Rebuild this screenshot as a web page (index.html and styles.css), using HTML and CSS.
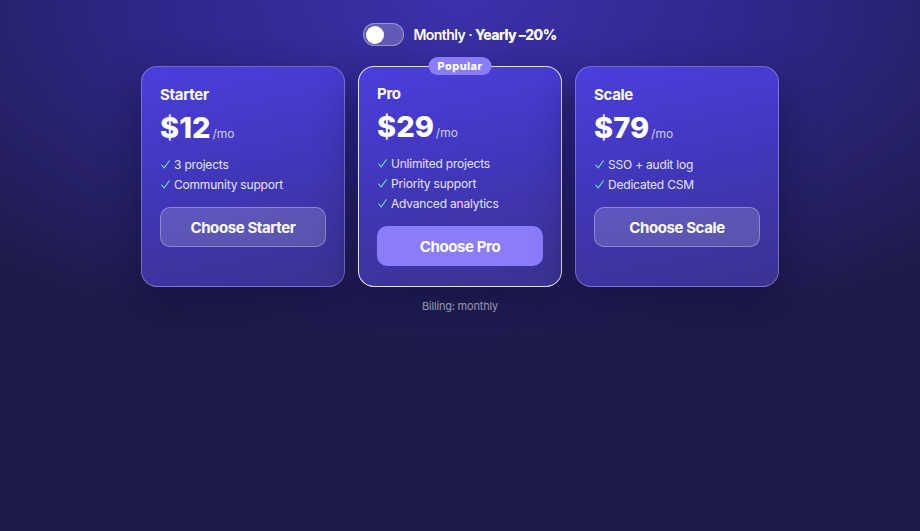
FILE: index.html
```html
<!DOCTYPE html>
<html lang="en">

<head>
  <meta charset="UTF-8">
  <meta name="viewport" content="width=device-width, initial-scale=1.0">
  <title>Pricing</title>
  <link rel="stylesheet" href="styles.css">
</head>

<body>
  <div class="page">
    <div class="billing-toggle">
      <div class="switch">
        <span class="knob"></span>
      </div>
      <span class="toggle-label">Monthly · <b>Yearly –20%</b></span>
    </div>

    <div class="plans">
      <div class="plan">
        <h3>Starter</h3>
        <div class="price">$12<span>/mo</span></div>
        <ul>
          <li><svg class="check" viewBox="0 0 9 9"><polyline points="0.8,5 3.2,8 8.3,0.8"/></svg>3 projects</li>
          <li><svg class="check" viewBox="0 0 9 9"><polyline points="0.8,5 3.2,8 8.3,0.8"/></svg>Community support</li>
        </ul>
        <button class="btn">Choose Starter</button>
      </div>
      <div class="plan popular">
        <span class="badge">Popular</span>
        <h3>Pro</h3>
        <div class="price">$29<span>/mo</span></div>
        <ul>
          <li><svg class="check" viewBox="0 0 9 9"><polyline points="0.8,5 3.2,8 8.3,0.8"/></svg>Unlimited projects</li>
          <li><svg class="check" viewBox="0 0 9 9"><polyline points="0.8,5 3.2,8 8.3,0.8"/></svg>Priority support</li>
          <li><svg class="check" viewBox="0 0 9 9"><polyline points="0.8,5 3.2,8 8.3,0.8"/></svg>Advanced analytics</li>
        </ul>
        <button class="btn">Choose Pro</button>
      </div>
      <div class="plan">
        <h3>Scale</h3>
        <div class="price">$79<span>/mo</span></div>
        <ul>
          <li><svg class="check" viewBox="0 0 9 9"><polyline points="0.8,5 3.2,8 8.3,0.8"/></svg>SSO + audit log</li>
          <li><svg class="check" viewBox="0 0 9 9"><polyline points="0.8,5 3.2,8 8.3,0.8"/></svg>Dedicated CSM</li>
        </ul>
        <button class="btn">Choose Scale</button>
      </div>
    </div>

    <p class="note">Billing: monthly</p>
  </div>
</body>

</html>
```

FILE: styles.css
```css
html,body{
  margin: 0;
  height: 100%;
}
body{
  font-family: Inter, "Liberation Sans", sans-serif;
  color: #fff;
  background-color: #1e1b4b;
  background-image: radial-gradient(ellipse 75% 65% at 50% 0, #3b31ad 0%, #2e2788 45%, #1e1b4b 100%);
  background-repeat: no-repeat;
}
h3,p,ul{
  margin: 0;
}
.page{
  display: flex;
  flex-direction: column;
  align-items: center;
  padding-top: 23px;
}
.billing-toggle{
  display: flex;
  align-items: center;
  gap: 9px;
}
.switch{
  box-sizing: border-box;
  width: 41px;
  height: 23px;
  border-radius: 12px;
  border: 1px solid rgba(255,255,255,.35);
  background: rgba(255,255,255,.22);
  display: flex;
  align-items: center;
  padding-left: 2px;
}
.knob{
  width: 18px;
  height: 18px;
  border-radius: 50%;
  background: #fff;
}
.toggle-label{
  font-size: 14px;
  font-weight: 600;
  letter-spacing: -.55px;
}
.toggle-label b{
  font-weight: 800;
}
.plans{
  display: flex;
  gap: 13px;
  margin-top: 20px;
}
.plan{
  position: relative;
  width: 204px;
  box-sizing: border-box;
  padding: 19px 18px 20px;
  border-radius: 16px;
  border: 1px solid rgba(255,255,255,.28);
  background: linear-gradient(168deg, #4a3fdd 0%, #4137bd 45%, #3a3390 100%);
  box-shadow: 0 18px 40px rgba(10,8,40,.45);
}
.plan.popular{
  border: 1.5px solid rgba(255,255,255,.85);
  padding-top: 18px;
}
.badge{
  position: absolute;
  top: -10px;
  left: 50%;
  transform: translateX(-50%);
  height: 18px;
  line-height: 18px;
  padding: 0 9px;
  border-radius: 9px;
  background: #8b7cf8;
  font-size: 11px;
  font-weight: 800;
  letter-spacing: .4px;
}
.plan h3{
  font-size: 15px;
  line-height: 18px;
  font-weight: 700;
  letter-spacing: -.3px;
}
.price{
  margin-top: 10px;
  font-size: 29px;
  line-height: 28px;
  font-weight: 800;
}
.price span{
  font-size: 12px;
  line-height: 1;
  font-weight: 400;
  color: rgba(255,255,255,.75);
  margin-left: 2px;
}
.plan ul{
  list-style: none;
  padding: 0;
  margin-top: 13px;
}
.plan li{
  font-size: 12px;
  line-height: 20px;
  letter-spacing: -.2px;
  color: #e6e4fb;
}
.check{
  width: 9px;
  height: 9px;
  margin: 0 4px 0 1px;
  fill: none;
  stroke: #6ee7b7;
  stroke-width: 1.1;
  stroke-linecap: round;
  stroke-linejoin: round;
}
.btn{
  display: block;
  width: 100%;
  height: 40px;
  margin-top: 12px;
  border-radius: 10px;
  border: 1px solid rgba(255,255,255,.3);
  background: rgba(255,255,255,.16);
  color: #fff;
  font-family: inherit;
  font-size: 15px;
  font-weight: 700;
  letter-spacing: -.4px;
}
.popular .btn{
  border-color: transparent;
  background: #8b7cfa;
}
.note{
  margin-top: 12px;
  font-size: 11px;
  line-height: 14px;
  letter-spacing: -.2px;
  color: rgba(255,255,255,.7);
}
```
